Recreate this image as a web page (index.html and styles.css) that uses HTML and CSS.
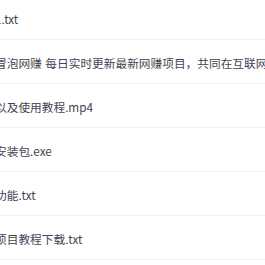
FILE: index.html
```html
<!DOCTYPE html>
<html lang="zh-CN">
<head>
<meta charset="utf-8">
<title>文件列表</title>
<link rel="stylesheet" href="styles.css">
</head>
<body>
<ul class="file-list">
  <li class="file-row"><span class="file-name">1.txt</span></li>
  <li class="file-row"><span class="file-name">冒泡网赚&nbsp;每日实时更新最新网赚项目，共同在互联网创业</span></li>
  <li class="file-row"><span class="file-name">以及使用教程.mp4</span></li>
  <li class="file-row"><span class="file-name">安装包.exe</span></li>
  <li class="file-row"><span class="file-name">功能.txt</span></li>
  <li class="file-row"><span class="file-name">项目教程下载.txt</span></li>
</ul>
</body>
</html>
```

FILE: styles.css
```css
html, body {
  margin: 0;
  padding: 0;
  background: #ffffff;
  overflow: hidden;
}

.file-list {
  list-style: none;
  margin: -4px 0 0 0;
  padding: 0;
}

.file-row {
  display: flex;
  align-items: center;
  height: 43px;
  border-bottom: 1px solid #edf1f7;
  overflow: hidden;
}

.file-name {
  margin-left: -5px;
  padding-top: 2px;
  white-space: nowrap;
  font-family: "Noto Sans CJK SC", "Noto Sans", sans-serif;
  font-size: 11.7px;
  line-height: 16px;
  color: #3f4552;
  word-spacing: 1px;
}
```
